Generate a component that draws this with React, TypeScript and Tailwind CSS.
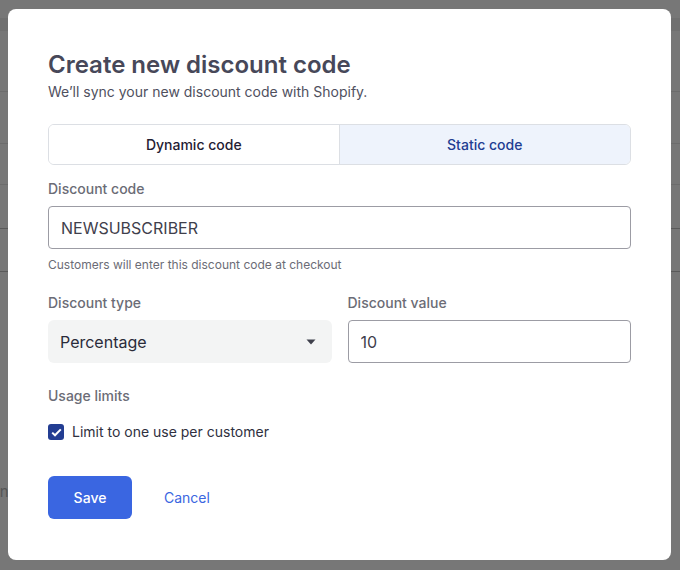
import React, { useState } from 'react';

const App: React.FC = () => {
  const [mode, setMode] = useState<'dynamic' | 'static'>('static');
  const [code, setCode] = useState('NEWSUBSCRIBER');
  const [value, setValue] = useState('10');
  const [limitOne, setLimitOne] = useState(true);

  return (
    <div className="relative w-[680px] h-[570px] overflow-hidden bg-[#777777] font-['Inter',sans-serif]">
      {/* dimmed page behind the modal */}
      <div className="flex flex-col">
        <div className="h-[18px]"></div>
        <div className="h-[13px] bg-[#707070]"></div>
        <div className="h-[60px]"></div>
        <div className="h-px bg-[#6c6c6c]"></div>
        <div className="h-[51px]"></div>
        <div className="h-px bg-[#6c6c6c]"></div>
        <div className="h-[40px]"></div>
        <div className="h-px bg-[#6c6c6c]"></div>
        <div className="h-[43px]"></div>
        <div className="h-px bg-[#5a5a5a]"></div>
        <div className="h-[42px]"></div>
        <div className="h-px bg-[#5a5a5a]"></div>
        <div className="h-[210px]"></div>
        <p className="text-[15px] leading-5 text-[#555555] -ml-[4px]">in</p>
      </div>

      {/* modal */}
      <div className="absolute left-[8px] top-[9px] w-[663px] bg-white rounded-lg px-10 pt-10 pb-[41px]">
        <h2 className="text-2xl leading-8 font-semibold text-[#474859]">Create new discount code</h2>
        <p className="text-sm leading-5 text-[#4f505e] mt-px">We’ll sync your new discount code with Shopify.</p>

        <div className="mt-[22px] grid grid-cols-2 h-[41px] border border-[#dcdfe4] rounded-md overflow-hidden">
          <button
            onClick={() => setMode('dynamic')}
            className={`text-sm font-medium border-r border-[#dcdfe4] ${mode === 'dynamic' ? 'bg-[#eef3fc] text-[#223d92]' : 'bg-white text-[#1f2033]'}`}
          >
            Dynamic code
          </button>
          <button
            onClick={() => setMode('static')}
            className={`text-sm font-medium ${mode === 'static' ? 'bg-[#eef3fc] text-[#223d92]' : 'bg-white text-[#1f2033]'}`}
          >
            Static code
          </button>
        </div>

        <label className="block mt-[14px] text-sm leading-5 font-medium text-[#6b6c76]">Discount code</label>
        <input
          value={code}
          onChange={(e) => setCode(e.target.value)}
          className="mt-[7px] w-full h-[43px] px-3 border border-[#9c9ca4] rounded text-base text-[#3f404c] outline-none"
        />
        <p className="mt-2 text-xs leading-4 text-[#6b6c76]">Customers will enter this discount code at checkout</p>

        <div className="mt-5 grid grid-cols-2 gap-4">
          <div>
            <label className="block text-sm leading-5 font-medium text-[#6b6c76]">Discount type</label>
            <div className="mt-[7px] h-[43px] px-3 bg-[#f3f4f4] rounded-md flex items-center justify-between">
              <span className="text-base text-[#2a2b3a]">Percentage</span>
              <svg width="10" height="6" viewBox="0 0 10 6" className="mr-[4px]">
                <path d="M0.5 0.5 L9.5 0.5 L5 5.5 Z" fill="#3f404c" />
              </svg>
            </div>
          </div>
          <div>
            <label className="block text-sm leading-5 font-medium text-[#6b6c76]">Discount value</label>
            <input
              value={value}
              onChange={(e) => setValue(e.target.value)}
              className="mt-[7px] w-full h-[43px] px-3 border border-[#9c9ca4] rounded text-base text-[#3f404c] outline-none"
            />
          </div>
        </div>

        <p className="mt-[23px] text-sm leading-5 font-medium text-[#6b6c76]">Usage limits</p>
        <label className="mt-4 flex items-center gap-2 cursor-pointer">
          <span
            onClick={() => setLimitOne(!limitOne)}
            className={`w-4 h-4 rounded-[3px] flex items-center justify-center ${limitOne ? 'bg-[#233d92]' : 'bg-white border border-[#9c9ca4]'}`}
          >
            {limitOne && (
              <svg width="11" height="9" viewBox="0 0 11 9">
                <path d="M1.2 4.6 L4 7.3 L9.8 1.4" stroke="white" strokeWidth="2" fill="none" />
              </svg>
            )}
          </span>
          <span className="text-sm leading-5 text-[#2f3040]">Limit to one use per customer</span>
        </label>

        <div className="mt-[34px] flex items-center gap-8">
          <button className="w-[84px] h-[43px] rounded-md bg-[#3a66e1] text-white text-sm font-medium">Save</button>
          <button className="text-sm text-[#3a66e1]">Cancel</button>
        </div>
      </div>
    </div>
  );
};

export default App;
